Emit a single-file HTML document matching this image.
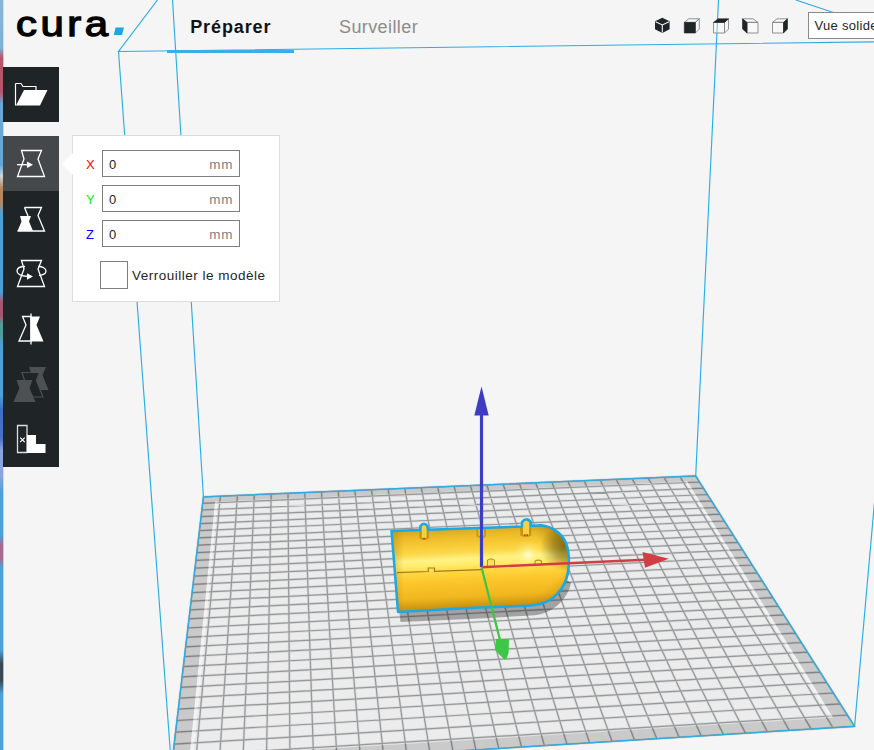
<!DOCTYPE html>
<html lang="fr"><head><meta charset="utf-8"><title>Cura</title>
<style>
html,body{margin:0;padding:0;}
body{width:874px;height:750px;overflow:hidden;background:#f5f5f5;position:relative;
 font-family:"Liberation Sans",sans-serif;color:#1f2427;}
#scene{position:absolute;left:0;top:0;display:block;}
.abs{position:absolute;}
#edge{left:0;top:0;width:3px;height:750px;
 background:linear-gradient(to bottom,#8ab4d2 0,#7fb2d6 48px,#b85468 58px,#b85468 92px,#6aa8d8 104px,#62a6d8 165px,#cfd6da 176px,#b8865c 188px,#b8865c 202px,#4aa2da 214px,#48a0d8 292px,#a85670 302px,#a85670 316px,#4f9c98 324px,#4f9c98 334px,#4aa2da 346px,#4aa2da 395px,#3f6ec8 410px,#4a70c8 438px,#8aa4e2 450px,#8aa4e2 476px,#4aa2da 492px,#4aa2da 536px,#a86a8c 545px,#a86a8c 558px,#4aa2da 568px,#4aa2da 650px,#3a4650 664px,#3a4650 680px,#4aa2da 694px,#4aa2da 750px);}
#edge2{left:3px;top:0;width:1px;opacity:0.35;height:750px;
 background:linear-gradient(to bottom,#8ab4d2 0,#7fb2d6 48px,#b85468 58px,#b85468 92px,#6aa8d8 104px,#62a6d8 165px,#cfd6da 176px,#b8865c 188px,#b8865c 202px,#4aa2da 214px,#48a0d8 292px,#a85670 302px,#a85670 316px,#4f9c98 324px,#4f9c98 334px,#4aa2da 346px,#4aa2da 395px,#3f6ec8 410px,#4a70c8 438px,#8aa4e2 450px,#8aa4e2 476px,#4aa2da 492px,#4aa2da 536px,#a86a8c 545px,#a86a8c 558px,#4aa2da 568px,#4aa2da 650px,#3a4650 664px,#3a4650 680px,#4aa2da 694px,#4aa2da 750px);}
#logo{left:16px;top:1.5px;font-weight:normal;font-size:35.5px;letter-spacing:3px;transform:scaleX(1.18);transform-origin:0 0;-webkit-text-stroke:1.3px #000;color:#000;line-height:44px;white-space:nowrap;}
#logo span{color:#1fa5e0;-webkit-text-stroke:0;font-weight:bold;font-size:50px;line-height:10px;position:relative;top:-0.5px;margin-left:1.7px;display:inline-block;transform:skewX(-12deg);}
.tab{top:14.6px;font-size:18px;line-height:24px;white-space:nowrap;}
#t1{left:190.2px;letter-spacing:0.9px;font-weight:bold;color:#101316;}
#t2{left:339px;letter-spacing:0.4px;color:#8c8c8c;}
#tabline{left:167px;top:50px;width:127px;height:3px;background:#3aaeea;}
#toolbar .btn{position:absolute;left:3px;width:56px;height:55px;background:#1f2427;}
#toolbar .btn.active{background:#44484b;}
#toolbar svg{position:absolute;left:1px;top:0;}
#panel{left:72px;top:135px;width:208px;height:167px;background:#fff;border:1px solid #dcdcdc;box-sizing:border-box;}
#parrow{left:62px;top:153px;width:0;height:0;border-top:11px solid transparent;border-bottom:11px solid transparent;border-right:11px solid #fff;}
.lbl{font-size:13px;line-height:26px;width:12px;text-align:left;}
.fld{left:102px;width:138px;height:27px;border:1px solid #7f7f7f;box-sizing:border-box;background:#fff;font-size:13px;line-height:25px;}
.fld .v{position:absolute;left:6px;top:0.7px;color:#1f2427;}
.fld .u{position:absolute;right:5.5px;top:0.7px;color:#7f7f7f;font-size:13.5px;letter-spacing:0.9px;}
#chk{left:100px;top:261px;width:28px;height:28px;border:1px solid #7f7f7f;box-sizing:border-box;background:#fff;}
#chklbl{left:132px;top:266.8px;font-size:13.5px;line-height:18px;white-space:nowrap;letter-spacing:0.5px;}
#viewsel{left:808px;top:12px;width:80px;height:27px;border:1px solid #8a8a8a;box-sizing:border-box;background:#fff;font-size:13px;line-height:26.6px;padding-left:5.5px;white-space:nowrap;letter-spacing:0.3px;}

</style></head>
<body>
<svg id="scene" width="874" height="750" viewBox="0 0 874 750">
<defs>
 <linearGradient id="mg" x1="480" y1="527" x2="484" y2="608" gradientUnits="userSpaceOnUse">
  <stop offset="0" stop-color="#d8a61e"/>
  <stop offset="0.1" stop-color="#eebb28"/>
  <stop offset="0.22" stop-color="#f8cc38"/>
  <stop offset="0.3" stop-color="#fcd84c"/>
  <stop offset="0.38" stop-color="#fff384"/>
  <stop offset="0.45" stop-color="#ffec6c"/>
  <stop offset="0.53" stop-color="#ffd844"/>
  <stop offset="0.64" stop-color="#fcc82c"/>
  <stop offset="0.85" stop-color="#f0b61e"/>
  <stop offset="1" stop-color="#c48c0e"/>
 </linearGradient>
 <linearGradient id="cap" x1="532" y1="572" x2="570" y2="542" gradientUnits="userSpaceOnUse">
  <stop offset="0.5" stop-color="#6b5200" stop-opacity="0"/>
  <stop offset="0.8" stop-color="#6b5200" stop-opacity="0.25"/>
  <stop offset="1" stop-color="#6b5200" stop-opacity="0.45"/>
 </linearGradient>
 <radialGradient id="cap3" cx="564" cy="547" r="24" gradientUnits="userSpaceOnUse">
  <stop offset="0" stop-color="#5a4400" stop-opacity="0.6"/>
  <stop offset="0.45" stop-color="#5a4400" stop-opacity="0.4"/>
  <stop offset="1" stop-color="#5a4400" stop-opacity="0"/>
 </radialGradient>
 <linearGradient id="cap2" x1="540" y1="570" x2="566" y2="598" gradientUnits="userSpaceOnUse">
  <stop offset="0.45" stop-color="#b07000" stop-opacity="0"/>
  <stop offset="1" stop-color="#b07000" stop-opacity="0.4"/>
 </linearGradient>
 <radialGradient id="hl" cx="528" cy="555" r="15" gradientUnits="userSpaceOnUse">
  <stop offset="0" stop-color="#fffde0" stop-opacity="0.95"/>
  <stop offset="0.4" stop-color="#fff6a0" stop-opacity="0.5"/>
  <stop offset="1" stop-color="#fff080" stop-opacity="0"/>
 </radialGradient>
 <linearGradient id="lft" x1="394" y1="0" x2="404" y2="0" gradientUnits="userSpaceOnUse">
  <stop offset="0" stop-color="#8a6a00" stop-opacity="0.25"/>
  <stop offset="1" stop-color="#8a6a00" stop-opacity="0"/>
 </linearGradient>
 <clipPath id="mclip"><path d="M391.500 531L420 530L420.500 526Q424 521.500 427.500 526L428 529.700L478 528L522 526.500L522 522Q526.500 516.500 531 522L531 526L541 525.300C552 526.500 562 533 566 543C569 551 569.500 562 568 572C566 584 559 594 550 600C544 603.500 536 605.300 528 605.700L480 607.600L398 612L394 561Z"/></clipPath>
</defs>
<g fill="none" stroke="#2cade6" stroke-width="1.15">
 <path d="M157.500 0L118.500 51.500L874 41.800M118.500 51.500L171.500 767.500M172.500 0L203.400 496.800M718.500 0L695.700 475.900M795.800 0L874 26M854.600 726.400L880 440"/>
</g>
<polygon points="203.4,496.8 695.7,475.9 854.6,726.4 171.2,768.9" fill="#ececec"/>
<path d="M203.4,496.8L171.2,768.9M203.4,496.8L695.7,475.9M220.4,496.1L195.1,767.4M202.6,503.3L699.6,482.0M237.4,495.4L219.0,765.9M201.8,510.0L703.5,488.2M254.3,494.6L242.7,764.5M201.0,516.7L707.5,494.5M271.2,493.9L266.4,763.0M200.2,523.7L711.6,500.9M288.0,493.2L290.0,761.5M199.4,530.7L715.8,507.5M304.8,492.5L313.6,760.0M198.5,537.9L720.0,514.2M321.5,491.8L337.0,758.6M197.7,545.2L724.3,521.0M338.2,491.1L360.4,757.1M196.8,552.7L728.7,528.0M354.9,490.4L383.6,755.7M195.9,560.4L733.3,535.1M371.5,489.7L406.8,754.2M194.9,568.2L737.9,542.3M388.1,489.0L429.9,752.8M194.0,576.2L742.5,549.7M404.7,488.3L453.0,751.4M193.0,584.4L747.3,557.3M421.2,487.6L475.9,749.9M192.1,592.7L752.2,565.0M437.6,486.9L498.8,748.5M191.0,601.2L757.2,572.9M454.1,486.2L521.6,747.1M190.0,609.9L762.3,580.9M470.4,485.5L544.4,745.7M189.0,618.8L767.5,589.2M486.8,484.8L567.0,744.3M187.9,628.0L772.9,597.6M503.1,484.1L589.6,742.9M186.8,637.3L778.3,606.1M519.4,483.4L612.1,741.5M185.6,646.8L783.9,614.9M535.6,482.7L634.5,740.1M184.5,656.6L789.6,623.9M551.8,482.0L656.8,738.7M183.3,666.6L795.4,633.1M567.9,481.3L679.1,737.3M182.1,676.9L801.4,642.5M584.0,480.6L701.3,735.9M180.8,687.4L807.5,652.1M600.1,480.0L723.4,734.6M179.6,698.2L813.7,662.0M616.1,479.3L745.5,733.2M178.3,709.2L820.1,672.1M632.1,478.6L767.4,731.8M176.9,720.5L826.7,682.4M648.1,477.9L789.3,730.5M175.5,732.2L833.4,693.0M664.0,477.2L811.2,729.1M174.1,744.1L840.3,703.9M679.9,476.6L832.9,727.7M172.7,756.3L847.4,715.0M695.7,475.9L854.6,726.4M171.2,768.9L854.6,726.4" stroke="rgba(120,122,126,0.16)" stroke-width="2.6" fill="none"/>
<path d="M203.4,496.8L171.2,768.9M203.4,496.8L695.7,475.9M220.4,496.1L195.1,767.4M202.6,503.3L699.6,482.0M237.4,495.4L219.0,765.9M201.8,510.0L703.5,488.2M254.3,494.6L242.7,764.5M201.0,516.7L707.5,494.5M271.2,493.9L266.4,763.0M200.2,523.7L711.6,500.9M288.0,493.2L290.0,761.5M199.4,530.7L715.8,507.5M304.8,492.5L313.6,760.0M198.5,537.9L720.0,514.2M321.5,491.8L337.0,758.6M197.7,545.2L724.3,521.0M338.2,491.1L360.4,757.1M196.8,552.7L728.7,528.0M354.9,490.4L383.6,755.7M195.9,560.4L733.3,535.1M371.5,489.7L406.8,754.2M194.9,568.2L737.9,542.3M388.1,489.0L429.9,752.8M194.0,576.2L742.5,549.7M404.7,488.3L453.0,751.4M193.0,584.4L747.3,557.3M421.2,487.6L475.9,749.9M192.1,592.7L752.2,565.0M437.6,486.9L498.8,748.5M191.0,601.2L757.2,572.9M454.1,486.2L521.6,747.1M190.0,609.9L762.3,580.9M470.4,485.5L544.4,745.7M189.0,618.8L767.5,589.2M486.8,484.8L567.0,744.3M187.9,628.0L772.9,597.6M503.1,484.1L589.6,742.9M186.8,637.3L778.3,606.1M519.4,483.4L612.1,741.5M185.6,646.8L783.9,614.9M535.6,482.7L634.5,740.1M184.5,656.6L789.6,623.9M551.8,482.0L656.8,738.7M183.3,666.6L795.4,633.1M567.9,481.3L679.1,737.3M182.1,676.9L801.4,642.5M584.0,480.6L701.3,735.9M180.8,687.4L807.5,652.1M600.1,480.0L723.4,734.6M179.6,698.2L813.7,662.0M616.1,479.3L745.5,733.2M178.3,709.2L820.1,672.1M632.1,478.6L767.4,731.8M176.9,720.5L826.7,682.4M648.1,477.9L789.3,730.5M175.5,732.2L833.4,693.0M664.0,477.2L811.2,729.1M174.1,744.1L840.3,703.9M679.9,476.6L832.9,727.7M172.7,756.3L847.4,715.0M695.7,475.9L854.6,726.4M171.2,768.9L854.6,726.4" stroke="#96989b" stroke-width="1.2" fill="none"/>
<path fill-rule="evenodd" fill="rgba(0,0,0,0.14)" d="M203.4,496.8L695.7,475.9L854.6,726.4L171.2,768.9Z M215.1,501.5L687.3,481.3L833.0,717.6L189.5,757.1Z"/>
<path fill="rgba(255,255,255,0.38)" d="M215.1,501.5L217.7,501.4L193.1,756.9L189.5,757.1Z M687.3,481.3L684.9,481.4L829.8,717.8L833.0,717.6Z"/>
<path d="M203.400 496.800L695.700 475.900L854.600 726.400L171.200 768.900Z" fill="none" stroke="#2cade6" stroke-width="1.3"/>
<!-- shadow -->
<path d="M398 600L400.500 622L480 618.500L535 615.300C552 613 567 601 571 583L560 575Z" fill="rgba(0,0,0,0.31)"/>
<!-- model -->
<g clip-path="url(#mclip)">
 <rect x="385" y="510" width="195" height="110" fill="url(#mg)"/>
 <rect x="385" y="510" width="30" height="110" fill="url(#lft)"/>
 <rect x="500" y="510" width="80" height="110" fill="url(#cap)"/>
 <rect x="500" y="510" width="80" height="110" fill="url(#cap2)"/>
 <rect x="530" y="515" width="50" height="70" fill="url(#cap3)"/>
 <circle cx="528" cy="555" r="15" fill="url(#hl)"/>
 <path d="M419.500 538.500q4.700 3 9.400 0v-8h-9.400z" fill="#a07814" opacity="0.55"/>
 <path d="M421.800 537.500v-11.500q2.400-3 4.800 0v11.500q-2.400 1.500-4.800 0z" fill="#f8d040"/>
 <path d="M520.300 535.500q5.500 3 11 0v-8h-11z" fill="#a07814" opacity="0.55"/>
 <path d="M523 534.500v-12q3-3.500 6 0v12q-3 1.500-6 0z" fill="#f8d040"/>
 <path d="M476.500 536.500q5 3 9.500 0v-8h-9.500z" fill="#a07814" opacity="0.5"/>
 <path d="M478.500 535.500v-8h5.500v8q-2.700 1.500-5.500 0z" fill="#f4c838"/>
 <rect x="423.300" y="537.800" width="1.600" height="1.600" fill="#e02020"/>
 <rect x="524" y="534.300" width="1.500" height="1.500" fill="#e02020"/><rect x="526.500" y="534.300" width="1.500" height="1.500" fill="#e02020"/>
 <path d="M397 572.600L428.300 571.500V568h6.200v3.300L481 569.700" fill="none" stroke="#a07c18" stroke-width="1.200"/>
 <path d="M487.500 566.500v-6.500q3.500-2.500 7 0v6.200z" fill="#ffe060" stroke="#b8901c" stroke-width="1"/>
 <path d="M535 564.500v-3.500q3-1.800 6.500 0v3.300" fill="none" stroke="#b8901c" stroke-width="1.100"/>
</g>
<path d="M391.500 531L420 530L420.500 526Q424 521.500 427.500 526L428 529.700L478 528L522 526.500L522 522Q526.500 516.500 531 522L531 526L541 525.300C552 526.500 562 533 566 543C569 551 569.500 562 568 572C566 584 559 594 550 600C544 603.500 536 605.300 528 605.700L480 607.600L398 612L394 561Z" fill="none" stroke="#1aa8e6" stroke-width="2.500" stroke-linejoin="round"/>
<!-- axes -->
<path d="M481.500 567V414" stroke="#3c3cc4" stroke-width="3.200"/>
<path d="M481.500 386.500L488.700 415.500H474.300Z" fill="#3c3cc4"/>
<path d="M481.500 567.200L645 559.800" stroke="#d03e46" stroke-width="2.400"/>
<path d="M668.800 558.800L642.500 552L645 567.800Z" fill="#d03e46"/>
<path d="M481.500 567.200L500 640" stroke="#3cc846" stroke-width="2.300"/>
<path d="M496 639L509 638.800L508.600 652.500L506.500 659.200L504 659.200L495 650Z" fill="#3cc846"/>

</svg>
<div id="edge" class="abs"></div>
<div id="edge2" class="abs"></div>
<div id="logo" class="abs">cura<span>.</span></div>
<div id="t1" class="abs tab">Préparer</div>
<div id="t2" class="abs tab">Surveiller</div>
<div id="tabline" class="abs"></div>
<div id="toolbar">
 <div class="btn" style="top:67px"><svg width="55" height="55" viewBox="0 0 55 55"><path d="M11.5 16.5h5.5l2 3h13v3.5" fill="none" stroke="#fff" stroke-width="1.2"/><path d="M11.5 16.5v22" stroke="#fff" stroke-width="1.2" fill="none"/><path d="M20 23h23.5l-7.5 15.5h-24z" fill="#fff"/></svg></div>
 <div class="btn active" style="top:136px"><svg width="55" height="55" viewBox="0 0 55 55"><path d="M17.5 14.5h20l-3.5 8.5 6.5 17.5h-27l6.5-17.5z" fill="none" stroke="#fff" stroke-width="1.3"/><path d="M13 28.7h12" stroke="#fff" stroke-width="1.3"/><path d="M23 25.5l6 3.2-6 3.2z" fill="#fff"/></svg></div>
 <div class="btn" style="top:191px"><svg width="55" height="55" viewBox="0 0 55 55"><path d="M20.5 16.5h17l-3.5 8 6.5 15.5h-27" fill="none" stroke="#fff" stroke-width="1.3"/><path d="M16 25h11l-2 5.5 4 9.5h-15.5l4-9.5z" fill="#fff"/><path d="M20.5 16.5l3.5 8.500" stroke="#fff" stroke-width="1.3"/></svg></div>
 <div class="btn" style="top:246px"><svg width="55" height="55" viewBox="0 0 55 55"><path d="M17.500 14.500h20l-3.500 8.500 6.500 17.500h-27l6.500-17.500z" fill="none" stroke="#fff" stroke-width="1.3"/><path d="M21 20.500c-5 0-8 2-8 4.500s3 5 11 5.500" fill="none" stroke="#fff" stroke-width="1.3"/><path d="M34.500 20.500c4 0 7.500 2 7.500 4.500s-3 4-7 4.300" fill="none" stroke="#fff" stroke-width="1.300"/><path d="M23 27.300l6 3.200-6 3.200z" fill="#fff"/></svg></div>
 <div class="btn" style="top:301px"><svg width="55" height="55" viewBox="0 0 55 55"><path d="M27 15.500h-8.500l3.500 8.500-7 16h12z" fill="none" stroke="#fff" stroke-width="1.3"/><path d="M27 15.500h9l-3.500 8.500 7 16.500h-12.500z" fill="#fff"/><path d="M27 12.500v31" stroke="#fff" stroke-width="1.3"/></svg></div>
 <div class="btn" style="top:356px"><svg width="55" height="55" viewBox="0 0 55 55"><path d="M25 11h17l-3.500 8 6 15h-12z" fill="#4d5154"/><path d="M18 16.500h17.500l-3 8 6.500 16.500h-13z" fill="#1f2427" stroke="#4d5154" stroke-width="1.2"/><path d="M12.500 24h16l-3 8 6 14h-22l6-14z" fill="#4d5154"/></svg></div>
 <div class="btn" style="top:411px;height:56px"><svg width="55" height="55" viewBox="0 0 55 55"><path d="M13.500 14.500h9.500v27h-9.500z" fill="none" stroke="#ddd" stroke-width="1.3"/><path d="M23 24h9v9h9.500v9h-18.500z" fill="#fff"/><path d="M16.200 26.700l4.500 4.500m0-4.500l-4.500 4.500" stroke="#fff" stroke-width="1.2"/></svg></div>
</div>
<div id="panel" class="abs"></div>
<div id="parrow" class="abs"></div>
<div class="abs lbl" style="left:86px;top:152px;color:#ff0000">X</div>
<div class="abs lbl" style="left:86px;top:187px;color:#00f000">Y</div>
<div class="abs lbl" style="left:86px;top:222px;color:#0000ff">Z</div>
<div class="abs fld" style="top:150px"><span class="v">0</span><span class="u">mm</span></div>
<div class="abs fld" style="top:185px"><span class="v">0</span><span class="u">mm</span></div>
<div class="abs fld" style="top:220px"><span class="v">0</span><span class="u">mm</span></div>
<div id="chk" class="abs"></div>
<div id="chklbl" class="abs">Verrouiller le modèle</div>
<svg class="abs" style="left:650px;top:12px" width="150" height="28" viewBox="650 12 150 28">
 <g transform="translate(0,0.6)">
 <g id="v1"><path d="M662.300 17.200l7.300 3.500v8l-7.300 3.700-7.300-3.700v-8z" fill="#1f2427"/><path d="M655.600 21.200l6.700 3.200 6.700-3.200M662.300 24.400v7.600" stroke="#f5f5f5" stroke-width="1.100" fill="none"/></g>
 <g fill="rgba(255,255,255,0.35)" stroke="#85878a" stroke-width="0.9" stroke-linejoin="round">
  <path d="M684.300 21.800l4.500-3.600h10.500l-4 3.600zM699.300 18.200v10.200l-4 4v-10.600z"/>
  <path d="M713.500 21.800h11v10.600h-11zM728.500 18.200v10.200l-4 4v-10.600z"/>
  <path d="M747 21.800h11v10.600h-11zM742.500 18.200h10.500l5 3.600h-11z"/>
  <path d="M772.500 21.800h11v10.600h-11zM772.500 21.800l4.500-3.600h10.500l-4 3.600z"/>
 </g>
 <g fill="#1f2427" stroke="#1f2427" stroke-width="0.6" stroke-linejoin="round">
  <path d="M684.300 21.800h11v10.600h-11z"/>
  <path d="M713.500 21.800l4.500-3.600h10.500l-4 3.600z"/>
  <path d="M742.500 18.200l4.500 3.600v10.600l-4.500-4z"/>
  <path d="M787.500 18.200v10.200l-4 4v-10.600z"/>
 </g>
 </g>
</svg>
<div id="viewsel" class="abs">Vue solide</div>

</body></html>
